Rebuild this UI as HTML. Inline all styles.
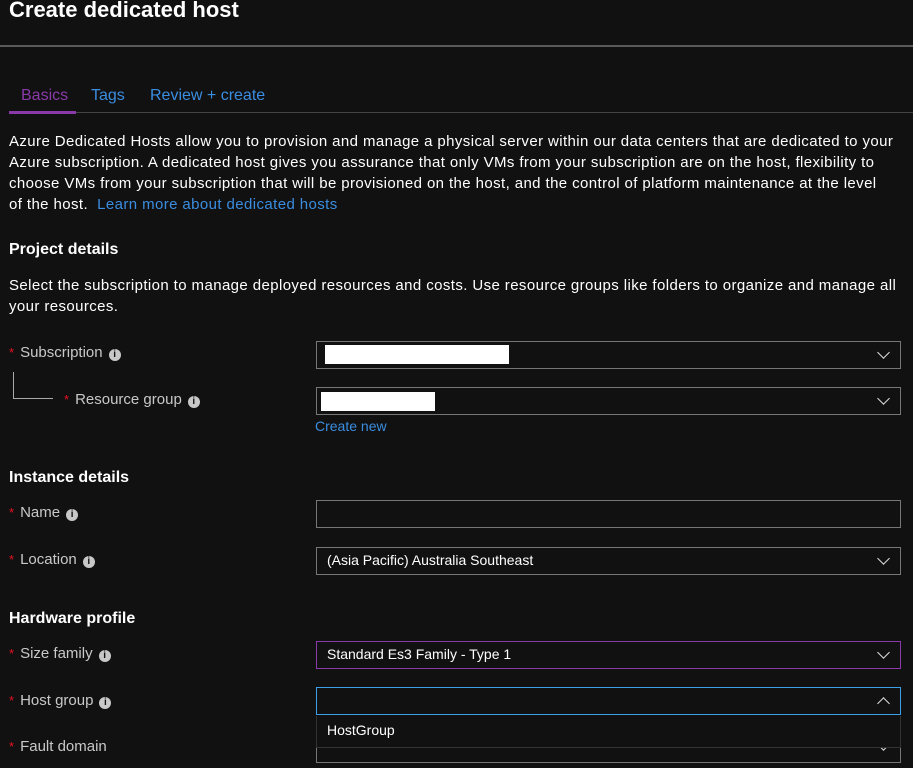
<!DOCTYPE html>
<html><head><style>
body{margin:0;background:#111;width:913px;height:768px;overflow:hidden;position:relative;font-family:"Segoe UI","Liberation Sans",sans-serif;color:#fff}
.a{position:absolute;white-space:nowrap}
.t{font-size:15px;color:#fff;letter-spacing:0.4px}
.h{font-size:16px;font-weight:bold}
.l{font-size:15px;color:#c8c8c8}
.s{color:#e81123;font-size:13px;margin-right:6px}
.i{display:inline-block;width:12px;height:12px;border-radius:50%;background:#c8c8c8;color:#111;font-size:10px;font-weight:bold;text-align:center;line-height:12px;margin-left:6px;vertical-align:0}
.b{position:absolute;left:316px;width:585px;border:1px solid #777;box-sizing:border-box;height:28px}
.c{position:absolute;right:12px;top:6px;width:8px;height:8px;border-right:1.5px solid #ddd;border-bottom:1.5px solid #ddd;transform:rotate(45deg)}
.u{transform:rotate(-135deg);top:11px}
.v{position:absolute;left:10px;top:4px;font-size:14px;color:#fff}
</style></head><body>
<div class="a" style="left:9px;top:-3px;font-size:22px;font-weight:bold">Create dedicated host</div>
<div class="a" style="left:0;top:45px;width:913px;height:2px;background:#5a5a5a"></div>
<div class="a" style="left:21px;top:87px;font-size:16px;color:#8a3aa8">Basics</div>
<div class="a" style="left:91px;top:87px;font-size:16px;color:#3b8de0">Tags</div>
<div class="a" style="left:150px;top:87px;font-size:16px;color:#3b8de0">Review + create</div>
<div class="a" style="left:9px;top:112px;width:904px;height:1px;background:#444"></div>
<div class="a" style="left:9px;top:111px;width:67px;height:3px;background:#8a3aa8"></div>
<div class="a t" style="left:9px;top:131px;line-height:21px">Azure Dedicated Hosts allow you to provision and manage a physical server within our data centers that are dedicated to your<br>Azure subscription. A dedicated host gives you assurance that only VMs from your subscription are on the host, flexibility to<br>choose VMs from your subscription that will be provisioned on the host, and the control of platform maintenance at the level<br>of the host.&nbsp; <span style="color:#3b8de0">Learn more about dedicated hosts</span></div>
<div class="a h" style="left:9px;top:241px">Project details</div>
<div class="a t" style="left:9px;top:275px;line-height:21px">Select the subscription to manage deployed resources and costs. Use resource groups like folders to organize and manage all<br>your resources.</div>
<div class="a l" style="left:9px;top:344px"><span class="s">*</span>Subscription<span class="i">i</span></div>
<div class="a" style="left:13px;top:372px;width:1px;height:27px;background:#aaa"></div>
<div class="a" style="left:13px;top:398px;width:40px;height:1px;background:#aaa"></div>
<div class="a l" style="left:64px;top:391px"><span class="s">*</span>Resource group<span class="i">i</span></div>
<div class="b" style="top:341px"><div class="a" style="left:8px;top:3px;width:184px;height:19px;background:#fff"></div><div class="c"></div></div>
<div class="b" style="top:387px"><div class="a" style="left:4px;top:4px;width:114px;height:19px;background:#fff"></div><div class="c"></div></div>
<div class="a" style="left:315px;top:418px;font-size:14px;color:#3b8de0">Create new</div>
<div class="a h" style="left:9px;top:469px">Instance details</div>
<div class="a l" style="left:9px;top:504px"><span class="s">*</span>Name<span class="i">i</span></div>
<div class="b" style="top:500px"></div>
<div class="a l" style="left:9px;top:551px"><span class="s">*</span>Location<span class="i">i</span></div>
<div class="b" style="top:547px"><div class="v">(Asia Pacific) Australia Southeast</div><div class="c"></div></div>
<div class="a h" style="left:9px;top:610px">Hardware profile</div>
<div class="a l" style="left:9px;top:645px"><span class="s">*</span>Size family<span class="i">i</span></div>
<div class="b" style="top:641px;border-color:#8a3aa8"><div class="v">Standard Es3 Family - Type 1</div><div class="c"></div></div>
<div class="a l" style="left:9px;top:692px"><span class="s">*</span>Host group<span class="i">i</span></div>
<div class="b" style="top:687px;border-color:#3ca0e8"><div class="c u"></div></div>
<div class="a l" style="left:9px;top:738px"><span class="s">*</span>Fault domain</div>
<div class="b" style="top:733px;height:30px"><div class="c" style="top:6px"></div></div>
<div class="a" style="left:316px;top:716px;width:585px;height:32px;background:#111;border:1px solid #333;border-top:none;box-sizing:border-box"><div class="v" style="top:6px">HostGroup</div></div>
</body></html>
